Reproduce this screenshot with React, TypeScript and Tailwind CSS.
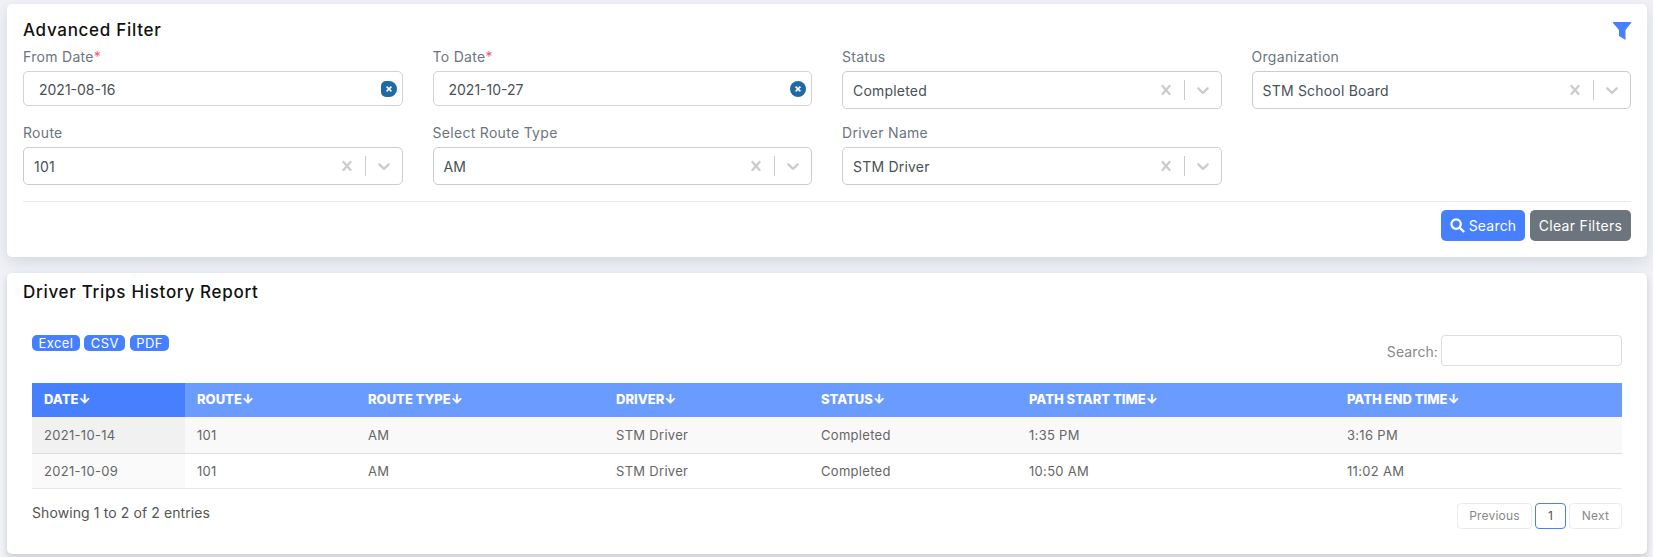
const rowOne = [
  { label: "Status", value: "Completed" },
  { label: "Organization", value: "STM School Board" },
];

const rowTwo = [
  { label: "Route", value: "101" },
  { label: "Select Route Type", value: "AM" },
  { label: "Driver Name", value: "STM Driver" },
];

const columns = [
  { name: "Date", width: "w-[153px]" },
  { name: "Route", width: "w-[171px]" },
  { name: "Route Type", width: "w-[248px]" },
  { name: "Driver", width: "w-[205px]" },
  { name: "Status", width: "w-[208px]" },
  { name: "Path Start Time", width: "w-[318px]" },
  { name: "Path End Time", width: "w-[287px]" },
];

const trips = [
  ["2021-10-14", "101", "AM", "STM Driver", "Completed", "1:35 PM", "3:16 PM"],
  ["2021-10-09", "101", "AM", "STM Driver", "Completed", "10:50 AM", "11:02 AM"],
];

const ClearIcon = () => (
  <svg viewBox="0 0 20 20" className="h-5 w-5 fill-[#cccccc]">
    <path d="M14.348 14.849c-0.469 0.469-1.229 0.469-1.697 0l-2.651-3.030-2.651 3.029c-0.469 0.469-1.229 0.469-1.697 0-0.469-0.469-0.469-1.229 0-1.697l2.758-3.15-2.759-3.152c-0.469-0.469-0.469-1.228 0-1.697s1.228-0.469 1.697 0l2.652 3.031 2.651-3.031c0.469-0.469 1.228-0.469 1.697 0s0.469 1.229 0 1.697l-2.758 3.152 2.758 3.15c0.469 0.469 0.469 1.229 0 1.698z" />
  </svg>
);

const ChevronIcon = () => (
  <svg viewBox="0 0 20 20" className="h-5 w-5 fill-[#cccccc]">
    <path d="M4.516 7.548c0.436-0.446 1.043-0.481 1.576 0l3.908 3.747 3.908-3.747c0.533-0.481 1.141-0.446 1.576 0 0.436 0.445 0.408 1.197 0 1.615-0.406 0.418-4.695 4.502-4.695 4.502-0.217 0.223-0.502 0.335-0.789 0.335s-0.572-0.112-0.79-0.335c0 0-4.287-4.084-4.695-4.502s-0.436-1.17 0-1.615z" />
  </svg>
);

const Label = ({ text, required }: { text: string; required?: boolean }) => (
  <div className="h-[19px] text-[14px] leading-[19px] tracking-[0.3px] text-[#6c757d]">
    {text}
    {required && <span className="text-[#ff5370]">*</span>}
  </div>
);

const DateField = ({ label, value, squared }: { label: string; value: string; squared?: boolean }) => (
  <div>
    <Label text={label} required />
    <div className="mt-[5px] flex h-[35px] items-center justify-between rounded-[5px] border border-[#ced4da] bg-white pl-[15px] pr-[5px] text-[14px] text-[#495057]">
      <span className="pt-[2px]">{value}</span>
      <span className={`flex h-4 w-4 items-center justify-center bg-[#1f6aa5] ${squared ? "rounded-l-[5px] rounded-r-[8px]" : "rounded-full"}`}>
        <svg viewBox="0 0 10 10" className="h-2 w-2 stroke-white stroke-[2]">
          <path d="M2 2l6 6M8 2l-6 6" />
        </svg>
      </span>
    </div>
  </div>
);

const SelectField = ({ label, value }: { label: string; value: string }) => (
  <div>
    <Label text={label} />
    <div className="mt-[5px] flex h-[38px] items-center rounded-[5px] border border-[#cccccc] bg-white pl-[10px] text-[14px] tracking-[0.2px] text-[#495057]">
      <span className="flex-1">{value}</span>
      <span className="flex w-9 justify-center">
        <ClearIcon />
      </span>
      <span className="h-[20px] w-px bg-[#cccccc]" />
      <span className="flex w-9 justify-center">
        <ChevronIcon />
      </span>
    </div>
  </div>
);

const ExportButton = ({ text }: { text: string }) => (
  <button className="flex h-4 items-center rounded-[5px] bg-[#4680ff] px-[6.5px] text-[13px] leading-4 tracking-[0.4px] text-white">{text}</button>
);

export default function App() {
  return (
    <div className="h-[557px] overflow-hidden bg-[#f0f2f6] pl-[7px] pr-[6px] pt-1 font-['Inter',sans-serif] text-[#495057]">
      {/* Advanced filter */}
      <div className="h-[253px] rounded-[5px] bg-white px-[16px] pt-[17px] shadow-[0_5px_15px_rgba(100,110,130,0.2)]">
        <div className="flex h-5 items-center justify-between">
          <h5 className="text-[17px] font-medium tracking-[0.7px] text-[#111111]">Advanced Filter</h5>
          <svg viewBox="0 0 18 18" className="h-[18px] w-[18px] fill-[#4680ff]">
            <path d="M0 0h18v1L12.5 8v10L6 14V8L0 1z" />
          </svg>
        </div>
        <div className="mt-[6px] grid grid-cols-4 gap-x-[30px] gap-y-[14px]">
          <DateField label="From Date" value="2021-08-16" squared />
          <DateField label="To Date" value="2021-10-27" />
          {rowOne.map((f) => (
            <SelectField key={f.label} label={f.label} value={f.value} />
          ))}
          {rowTwo.map((f) => (
            <SelectField key={f.label} label={f.label} value={f.value} />
          ))}
        </div>
        <div className="mt-[16px] border-t border-[#e6e8ec]" />
        <div className="mt-2 flex justify-end gap-[5px]">
          <button className="flex h-[31px] w-[84px] items-center justify-center gap-1 rounded-[5px] bg-[#4680ff] text-[14px] tracking-[0.2px] text-white">
            <svg viewBox="0 0 16 16" className="h-[15px] w-[15px] fill-none stroke-white stroke-[2.4]">
              <circle cx="6.5" cy="6.5" r="5" />
              <path d="M10.5 10.5L15 15" />
            </svg>
            Search
          </button>
          <button className="h-[31px] w-[101px] rounded-[5px] bg-[#6c757d] text-[14px] tracking-[0.3px] text-white">Clear Filters</button>
        </div>
      </div>

      {/* Report */}
      <div className="mt-4 h-[281px] rounded-[5px] bg-white px-[16px] pt-[9px] shadow-[0_3px_6px_rgba(100,110,130,0.3)]">
        <h5 className="h-5 text-[17px] font-medium leading-5 tracking-[0.7px] text-[#111111]">Driver Trips History Report</h5>
        <div className="px-[9px]">
          <div className="mt-[33px] flex h-[31px] items-start justify-between">
            <div className="flex gap-[4.5px]">
              <ExportButton text="Excel" />
              <ExportButton text="CSV" />
              <ExportButton text="PDF" />
            </div>
            <label className="flex items-center gap-[3px] text-[14px] tracking-[0.1px] text-[#888888]">
              <span className="pt-[1px]">Search:</span>
              <input className="h-[31px] w-[181px] rounded-[4px] border border-[#dddddd] bg-white outline-none" />
            </label>
          </div>
          <table className="mt-[17px] w-[1590px] table-fixed border-collapse text-left text-[13px] tracking-[0.3px]">
            <colgroup>
              {columns.map((c) => (
                <col key={c.name} className={c.width} />
              ))}
            </colgroup>
            <thead>
              <tr className="h-[34px] bg-[#6a9bff] text-white">
                {columns.map((c, i) => (
                  <th key={c.name} className={`px-3 text-[13px] font-extrabold uppercase tracking-normal ${i === 0 ? "bg-[#4680ff]" : ""}`}>
                    {c.name}↓
                  </th>
                ))}
              </tr>
            </thead>
            <tbody>
              {trips.map((row, r) => (
                <tr key={row[0]} className={r === 0 ? "h-[36px] border-b border-[#dddddd] bg-[#f9f9f9]" : "h-[35px] border-b border-[#e6e8ec] bg-white"}>
                  {row.map((cell, i) => (
                    <td key={i} className={`px-3 pt-[2px] text-[#666666] ${i === 0 ? (r === 0 ? "bg-[#f1f1f1]" : "bg-[#fafafa]") : ""}`}>
                      {cell}
                    </td>
                  ))}
                </tr>
              ))}
            </tbody>
          </table>
          <div className="mt-[14px] flex items-start justify-between">
            <div className="text-[14px] leading-5 tracking-[0.1px] text-[#555555]">Showing 1 to 2 of 2 entries</div>
            <div className="flex gap-[3px] text-[12px] tracking-[0.2px]">
              <button className="h-[26px] w-[75px] rounded-[4px] border border-[#e8ebf1] text-[#888888]">Previous</button>
              <button className="h-[26px] w-[31px] rounded-[4px] border border-[#4680ff] text-[#555555]">1</button>
              <button className="h-[26px] w-[53px] rounded-[4px] border border-[#e8ebf1] text-[#888888]">Next</button>
            </div>
          </div>
        </div>
      </div>
    </div>
  );
}
